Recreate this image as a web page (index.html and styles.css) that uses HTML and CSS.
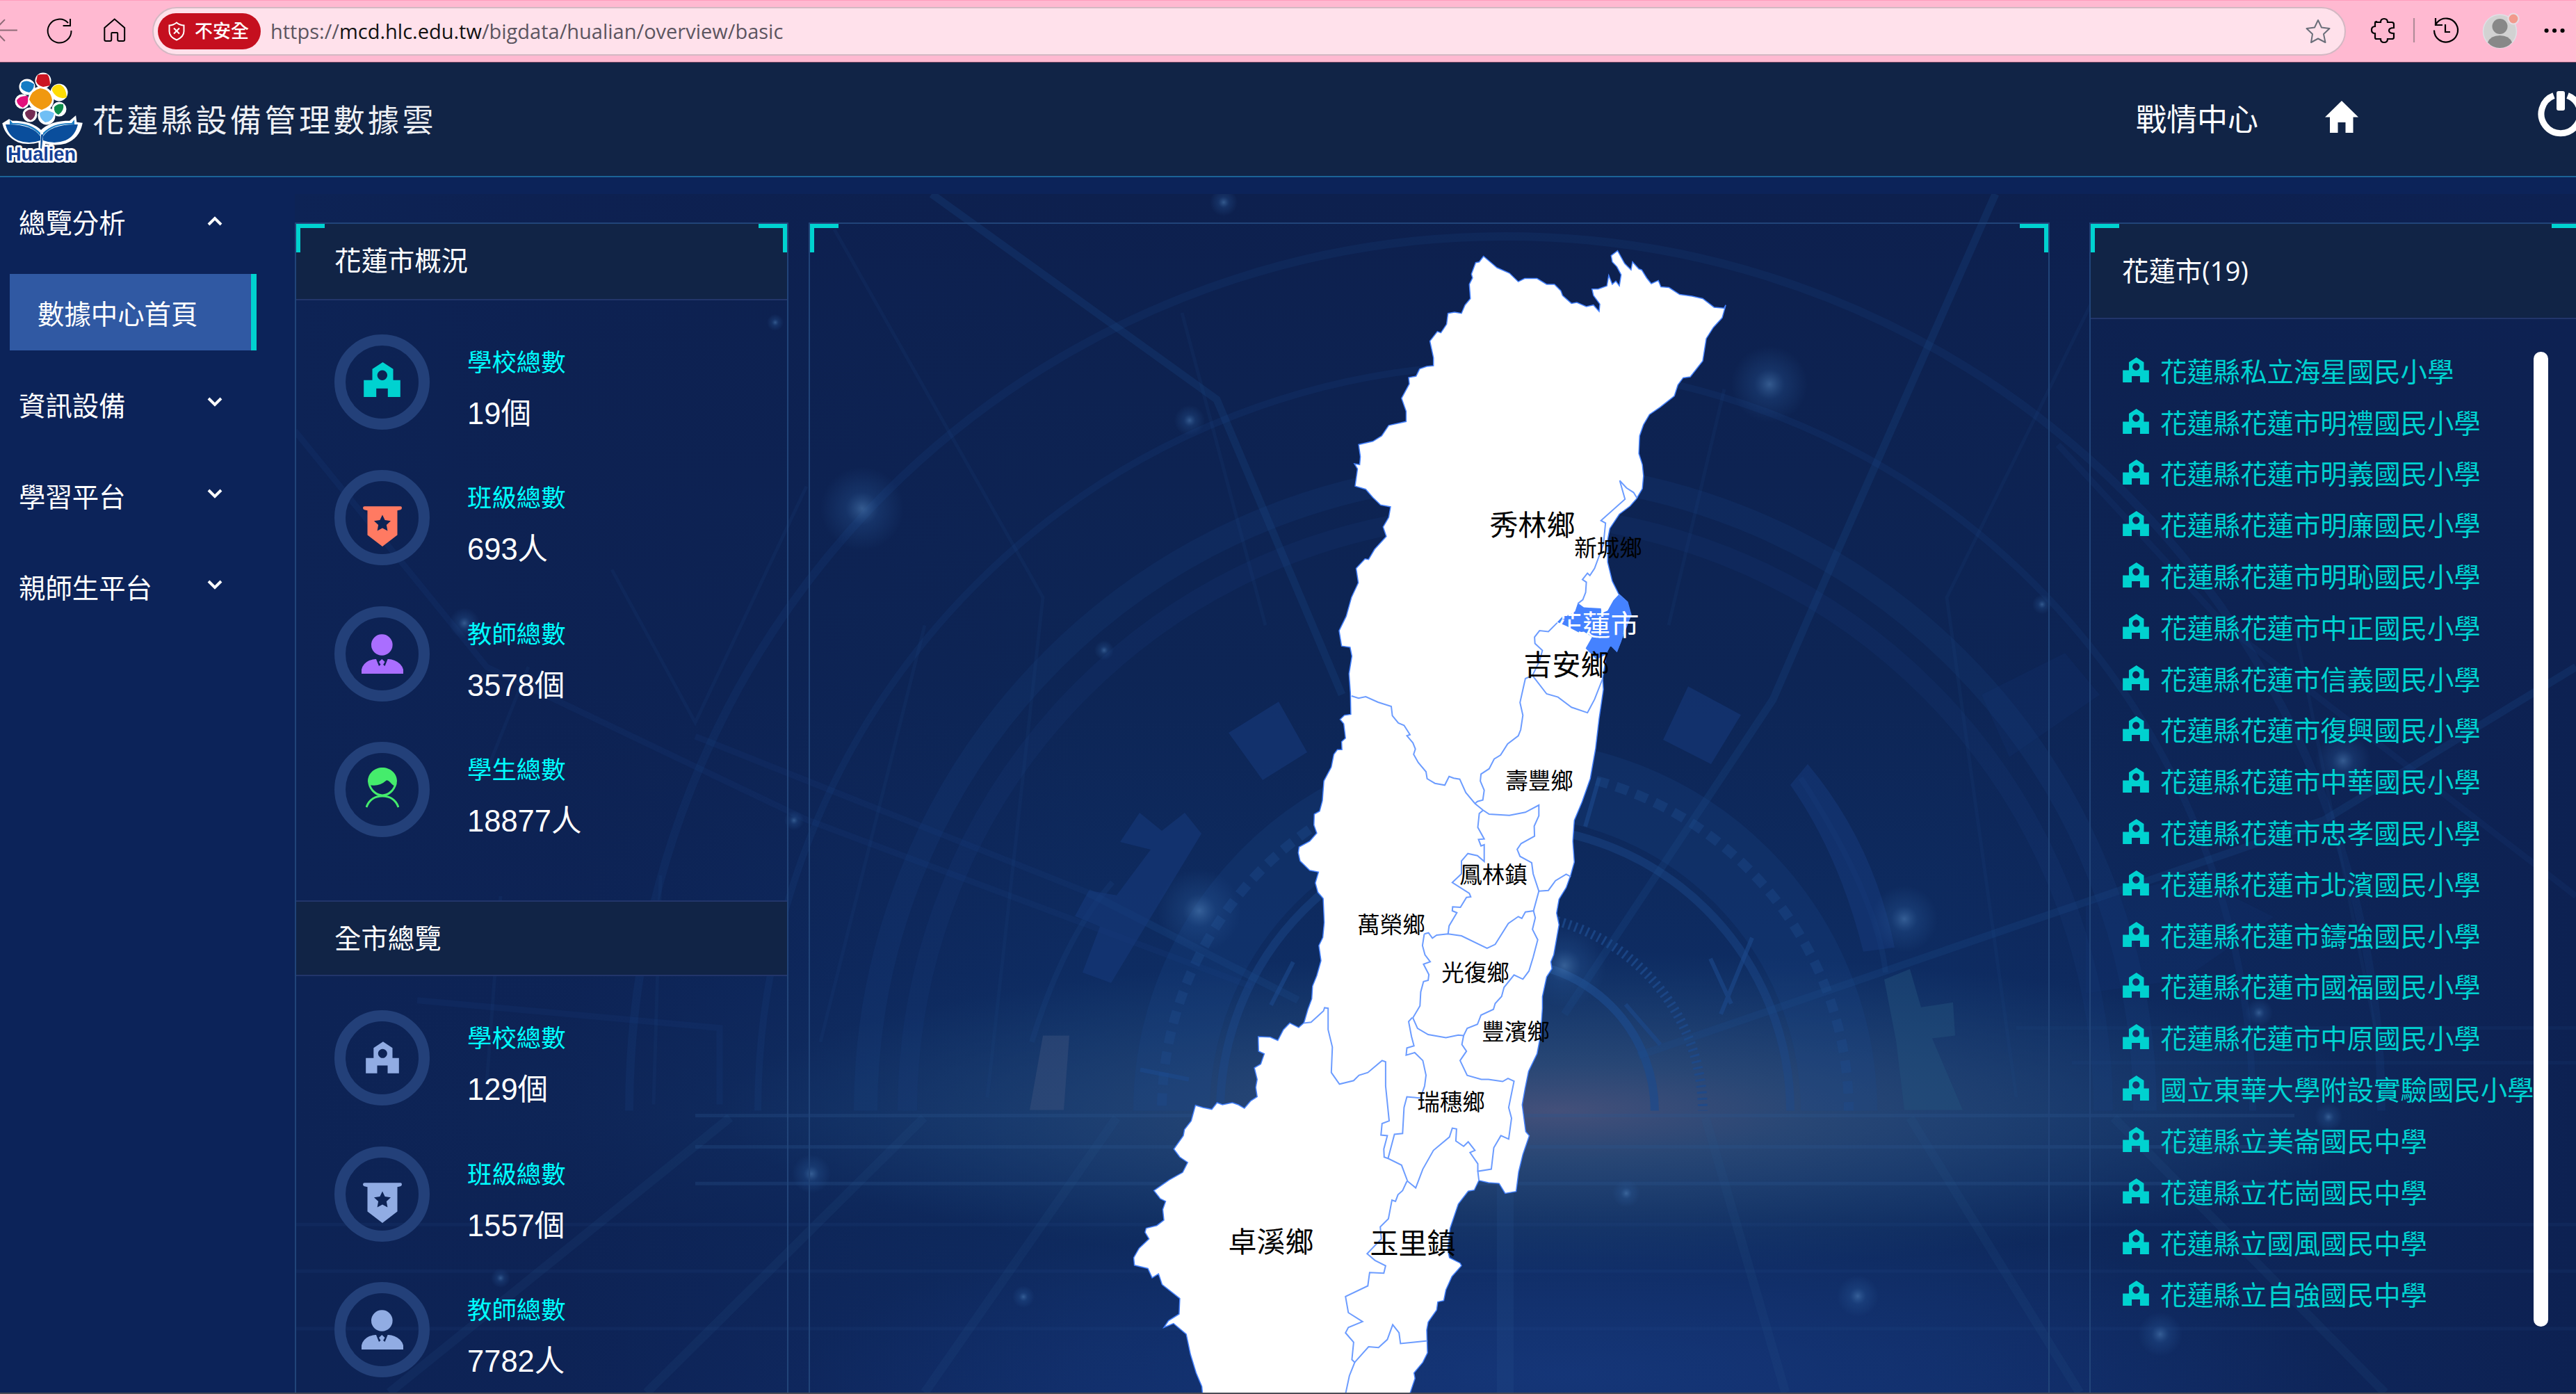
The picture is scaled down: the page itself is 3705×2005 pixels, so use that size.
FILE: index.html
```
<!DOCTYPE html>
<html lang="zh-Hant">
<head>
    <meta charset="UTF-8">
    <meta name="viewport" content="width=device-width, initial-scale=1.0">
    <title>花蓮縣設備管理數據雲</title>
    <link rel="stylesheet" href="styles.css">
</head>
<body>
    <!-- shared icons -->
    <svg class="sprite">
        <symbol id="school" viewBox="25.5 24 53 50">
            <path fill-rule="evenodd" d="M25.7 49.7H38V33.7L53 24l15 9.7v16h10.300V74H60.300V61.700H43.700V74H25.700ZM52.300 35.500a7.200 7.200 0 1 0 .1 0Z"/>
        </symbol>
        <symbol id="badge" viewBox="24 36 56 58">
            <path fill-rule="evenodd" d="M26.500 36.300h51.500q2 0 2 2.300t-2 2.600l-4.500 1v35.300L52 94 30.500 77.500V42.200l-4.500-1q-2-.3-2-2.600t2.500-2.300ZM52 48.500l-3.600 7.600-8.400 1.200 6.100 5.800-1.500 8.400 7.400-4 7.400 4-1.500-8.400 6.100-5.800-8.400-1.200Z"/>
        </symbol>
        <symbol id="teacher" viewBox="22 24 60 57">
            <circle cx="51.300" cy="39.500" r="15.300"/>
            <path d="M22 81V75Q24 66 33 62q7-2.500 10-2l4 10 2.500-2-2.500-4 4.300-4 4.300 4-2.500 4 2.500 2 4-10q4-.5 10 2 10 4 12.400 13V81Z"/>
        </symbol>
        <symbol id="student" viewBox="27 21 48 58">
            <path d="M30 41C30 29 40 21 51 21s21 8 21 19q0 5-2 8-4-1-8-6-4-4-6-2-10 9-24 6-2-2-2-5Z"/>
            <path d="M32 44c2 10 11 17 19 17s17-7 19-17M28 78c4-11 13-16 23-16s19 5 23 16" fill="none" stroke="currentColor" stroke-width="3"/>
        </symbol>
        <symbol id="chevron" viewBox="0 0 22 14">
            <path d="M2 2l9 9 9-9" fill="none" stroke="currentColor" stroke-width="4"/>
        </symbol>
    </svg>

    <div class="browser">
        <svg class="browser-nav" viewBox="0 0 220 89" fill="none" stroke="#000" stroke-width="2">
            <path d="M-4 42.500H25M7 27L-8 42.500 7 58" stroke="#8d6a76"/>
            <path d="M103 43a17 17 0 1 1-4.500-11M101.500 26v10H91"/>
            <path d="M151 39l14.500-12.500L180 39v17q0 2-2 2h-6q-2 0-2-2V47q0-1-1-1h-7q-1 0-1 1v9q0 2-2 2h-6q-2 0-2-2Z"/>
        </svg>
        <div class="address">
            <div class="unsafe">
                <svg viewBox="0 0 24 28" fill="none" stroke="#fff" stroke-width="2">
                    <path d="M12 1.500q5 4 10.500 4V14q0 8-10.500 12.500Q1.500 22 1.500 14V5.500q5.500 0 10.500-4ZM8 9.500l8 8M16 9.500l-8 8"/>
                </svg>
                <span>不安全</span>
            </div>
            <div class="url">https://<b>mcd.hlc.edu.tw</b>/bigdata/hualian/overview/basic</div>
            <svg class="star" viewBox="0 0 36 36" fill="none" stroke="#6b6f7a" stroke-width="2" stroke-linejoin="round">
                <path d="M18 2l5 10.500 11.500 1.500-8.500 8 2.500 12L18 28.500 8 34l2-12-8.500-8L13 12.500Z"/>
            </svg>
        </div>
        <svg class="browser-tools" viewBox="0 0 331 89" fill="none" stroke="#000" stroke-width="2.200">
            <path d="M44 31h6q0-5 5-5t5 5h6q3 0 3 3v5q-7 0-7 4t7 4v6q0 2-3 2h-6q0 5-5 5t-5-5h-6q-2 0-2-2v-6q-5 0-5-5t5-5v-5q0-2 2-2Z"/>
            <path d="M98 25v35" stroke="#b08c98"/>
            <path d="M127 42.500a17 17 0 1 0 4.500-11.500l-3 4M129 25v10h10M143 34v11h7"/>
            <circle cx="221.500" cy="44" r="24" fill="#d2d2d2" stroke="#dfe0e6" stroke-width="1.500"/>
            <circle cx="221.500" cy="37" r="11" fill="#888" stroke="none"/>
            <path d="M204 60q4-10 17.500-10T239 60q-7 8-17.500 8T204 60Z" fill="#888" stroke="none"/>
            <circle cx="241" cy="26" r="7.500" fill="#f29a8c" stroke="#e8dce4"/>
            <path d="M288.500 43h.1M300 43h.1M311.500 43h.1" stroke-width="6" stroke-linecap="round"/>
        </svg>
    </div>

    <header class="header">
        <svg class="logo" viewBox="0 0 120 140">
            <g stroke="#fff" stroke-width="7">
                <circle cx="62" cy="26" r="8"/><circle cx="39" cy="35" r="8"/><circle cx="85" cy="43" r="9"/>
                <circle cx="32" cy="56" r="7"/><circle cx="85" cy="67" r="7"/><circle cx="43" cy="75" r="7"/><circle cx="67" cy="77" r="9"/>
                <circle cx="59" cy="53" r="15"/>
            </g>
            <path d="M5 88l8-5 4 2q28 0 42 14 14-14 42-14l7-6 1 8 8 1q-4 20-23 27-14 4-30 0l-2 10h-5V113q-18 5-31 0-17-8-21-25Z" fill="#fff" stroke="#fff" stroke-width="3"/>
            <path d="M54 18q5-2 14-1 4 4 4 16l-10 2q-8-2-10-8Z" fill="#cb1422"/>
            <path d="M31 29q7-6 18 2 0 8-7 12-10-2-12-8Z" fill="#147cc4"/>
            <path d="M75 37q4-6 12-5 8 4 9 18-8 3-15-2-7-6-6-11Z" fill="#ffdc05"/>
            <path d="M24 54q5-7 16-6 1 8-1 12l-6 5q-9-4-9-11Z" fill="#e2107c"/>
            <path d="M78 64q5-6 13-4 2 9-7 15-7-3-6-11Z" fill="#0d8c4b"/>
            <path d="M36 72q6-8 15-2 0 10-7 13-8-4-8-11Z" fill="#742c54"/>
            <path d="M57 73q8-8 21 0-2 12-13 13-8-5-8-13Z" fill="#70bff5"/>
            <path d="M42 53q3-13 16-16 15 2 17 17-1 9-15 14-14-5-18-15Z" fill="#f0980f"/>
            <path d="M8 89q38-1 50 17v6Q42 118 26 112 12 106 8 89Z" fill="#0a4e9c"/>
            <path d="M112 89q-38-1-50 17v6q16 6 32 0 14-6 18-23Z" fill="#0a4e9c"/>
            <path d="M14 82l4 5q26-1 40 14v4Q43 87 14 89Zm93 0l-4 5q-26-1-41 14v4q14-18 45-16Z" fill="#1a7cc4"/>
            <path d="M59 104q2-2 3 0l-2 20h-2Z" fill="#0a4e9c"/>
            <text x="60" y="141" textLength="98" lengthAdjust="spacingAndGlyphs">Hualien</text>
        </svg>
        <h1>花蓮縣設備管理數據雲</h1>
        <nav>
            <span>戰情中心</span>
            <svg class="home" viewBox="0 0 48 46" fill="#fff"><path d="M24 0l24 23.500H40.500V46H29.500V31H18.500V46H7V23.500H0Z"/></svg>
            <svg class="power" viewBox="0 0 66 66">
                <path d="M23 6.500a28 28 0 1 0 20 0" fill="none" stroke="#fff" stroke-width="9"/>
                <rect x="27" y="0" width="12" height="28" rx="3" fill="#fff"/>
            </svg>
        </nav>
    </header>

    <div class="main">
        <aside class="sidebar">
            <div class="menu-item"><span>總覽分析</span><svg class="open"><use href="#chevron"/></svg></div>
            <div class="menu-item active"><span>數據中心首頁</span></div>
            <div class="menu-item"><span>資訊設備</span><svg><use href="#chevron"/></svg></div>
            <div class="menu-item"><span>學習平台</span><svg><use href="#chevron"/></svg></div>
            <div class="menu-item"><span>親師生平台</span><svg><use href="#chevron"/></svg></div>
        </aside>

        <div class="content">
            <!-- tech background -->
            <svg class="backdrop" viewBox="424 279 3281 1726" preserveAspectRatio="none">
                <defs>
                    <linearGradient id="base" x1="0" y1="0" x2="0" y2="1">
                        <stop offset="0" stop-color="#0d204e"/>
                        <stop offset=".4" stop-color="#0d2555"/>
                        <stop offset=".65" stop-color="#0e2c62"/>
                        <stop offset=".77" stop-color="#12346a"/>
                        <stop offset=".86" stop-color="#0e2a5e"/>
                        <stop offset="1" stop-color="#102c66"/>
                    </linearGradient>
                    <linearGradient id="edges" x1="0" y1="0" x2="1" y2="0">
                        <stop offset="0" stop-color="#0d2355"/>
                        <stop offset=".12" stop-color="#0d2152" stop-opacity=".8"/>
                        <stop offset=".35" stop-color="#0d2152" stop-opacity="0"/>
                        <stop offset=".72" stop-color="#0d2152" stop-opacity="0"/>
                        <stop offset="1" stop-color="#0d2152"/>
                    </linearGradient>
                    <radialGradient id="haze">
                        <stop offset="0" stop-color="#44507a"/>
                        <stop offset=".3" stop-color="#2c4a77" stop-opacity=".85"/>
                        <stop offset="1" stop-color="#1b4477" stop-opacity="0"/>
                    </radialGradient>
                    <radialGradient id="glow">
                        <stop offset="0" stop-color="#4f80b8" stop-opacity=".6"/>
                        <stop offset=".4" stop-color="#2b5c9c" stop-opacity=".28"/>
                        <stop offset="1" stop-color="#2b5c9c" stop-opacity="0"/>
                    </radialGradient>
                    <radialGradient id="floor">
                        <stop offset="0" stop-color="#16387c" stop-opacity=".8"/>
                        <stop offset="1" stop-color="#16387c" stop-opacity="0"/>
                    </radialGradient>
                    <clipPath id="sky"><rect x="424" y="279" width="3281" height="1320"/></clipPath>
                </defs>
                <rect x="424" y="279" width="3281" height="1726" fill="url(#base)"/>
                <rect x="424" y="279" width="3281" height="1726" fill="url(#edges)"/>
                <ellipse cx="2250" cy="1980" rx="1100" ry="240" fill="url(#floor)"/>
                <ellipse cx="2240" cy="1600" rx="1200" ry="230" fill="url(#haze)"/>
                <g clip-path="url(#sky)" fill="none" stroke="#1d4a8c">
                    <circle cx="2165" cy="1600" r="1260" stroke-width="12" opacity=".18"/>
                    <circle cx="2165" cy="1600" r="1075" stroke-width="10" opacity=".18"/>
                    <circle cx="2165" cy="1600" r="920" stroke-width="34" opacity=".18"/>
                    <circle cx="2165" cy="1600" r="860" stroke-width="28" opacity=".14"/>
                    <circle cx="2165" cy="1600" r="480" stroke-width="110" opacity=".22"/>
                    <circle cx="2165" cy="1600" r="494" stroke-width="14" stroke-dasharray="18 12" opacity=".4"/>
                    <circle cx="2165" cy="1600" r="410" stroke-width="12" opacity=".45"/>
                    <circle cx="2165" cy="1600" r="284" stroke-width="14" stroke-dasharray="3 6" opacity=".8"/>
                    <circle cx="2165" cy="1600" r="215" stroke-width="12" opacity=".7"/>
                    <path d="M2590 1120Q2700 1290 2712 1400M1484 1500Q1530 1350 1600 1270" stroke-width="8" opacity=".2"/>
                    <path d="M2250 1460L2550 1007 2640 800 2870 279M1340 279L1750 575 1930 1000M2356 1520L3342 1181 3705 960M1867 1440L1565 1285" stroke-width="11" opacity=".25"/>
                    <path d="M1565 1285L1000 1060M424 620L700 960 1160 1180 1800 1420M2960 640L3200 900 3705 1290M600 1440L1035 1480V1590" stroke-width="9" opacity=".14"/>
                    <path d="M1200 330L1500 860 1420 1580M1330 900L1180 1500M3060 330L2800 860 2900 1580M3300 900L3420 1500M1700 450L1820 900M2480 560L2400 900M880 820L1000 1040 1160 700M700 1110L760 960M720 1290L700 1560M950 1260L940 1590M2900 1480H3705M2980 1530H3705" stroke-width="5" opacity=".13"/>
                    <path d="M2338 1446l50 58M2520 1350l-45 110M2460 1380l30 65M1860 1385l-32 62M1640 1540l70 14M2300 1120l-20 70" stroke-width="6" opacity=".6"/>
                </g>
                <g fill="#16387a">
                    <path opacity=".6" d="M1839 1010L1880 1083 1816 1123 1767 1055ZM2428 988L2504 1029 2461 1100 2392 1065Z"/>
                    <path opacity=".55" d="M2600 1100l-25 30q70 100 105 240l45-6q-30-150-125-264Z"/>
                    <path opacity=".6" d="M1639 1170l32 26 33-26 24 30-130 215-41-15 25-66-36-15 20-37 40 7 49-66-44-11Z"/>
                    <path fill="#22507c" opacity=".5" d="M2710 1410l37-15 16 55 46-7 3 48-33 4 44 103h-84l-12-100Z"/>
                    <path fill="#3a4f7c" opacity=".5" d="M1500 1491h38l-8 107h-49Z"/>
                    <path opacity=".2" d="M3000 1300l150-40 120 60-130 90-140 20ZM2850 1000l120-60 50 60-130 90Z"/>
                </g>
                <!-- floor grid -->
                <g stroke="#2a5690" fill="none">
                    <path d="M1000 1606H3300M1000 1651H3300M1000 1704H3300" stroke-width="5" opacity=".28"/>
                    <path d="M424 1763H3705M424 1830H3705M424 1913H3705" stroke-width="5" opacity=".12"/>
                    <path d="M2165 1700V2005" stroke-width="24" opacity=".2"/>
                    <path d="M2453 1609L2568 2005M2747 1609L2991 2005M1606 1609L1330 2005M1329 1609L930 2005M3040 1609L3430 2005M1050 1609L560 2005" stroke-width="13" opacity=".15"/>
                </g>
                <g fill="url(#glow)">
                    <circle cx="2545" cy="553" r="55"/><circle cx="1240" cy="732" r="60"/><circle cx="1711" cy="605" r="22"/>
                    <circle cx="1760" cy="291" r="20"/><circle cx="1115" cy="464" r="12"/><circle cx="1588" cy="936" r="14"/>
                    <circle cx="1725" cy="1311" r="60"/><circle cx="2739" cy="1323" r="48"/><circle cx="2937" cy="870" r="14"/>
                    <circle cx="1142" cy="1181" r="14"/><circle cx="1167" cy="1690" r="28"/><circle cx="1472" cy="1867" r="16"/>
                    <circle cx="2672" cy="1866" r="30"/><circle cx="3107" cy="1921" r="32"/><circle cx="2339" cy="1718" r="20"/>
                    <circle cx="3249" cy="1458" r="20"/><circle cx="3349" cy="1608" r="20"/><circle cx="3370" cy="1095" r="40"/>
                    <circle cx="720" cy="1840" r="14"/><circle cx="668" cy="897" r="22"/><circle cx="2250" cy="1390" r="60"/>
                </g>
            </svg>

            <section class="panel stats">
                <h2>花蓮市概況</h2>
                <ul>
                    <li><i><svg class="i-school teal"><use href="#school"/></svg></i><div><b>學校總數</b><span>19個</span></div></li>
                    <li><i><svg class="i-badge coral"><use href="#badge"/></svg></i><div><b>班級總數</b><span>693人</span></div></li>
                    <li><i><svg class="i-teacher purple"><use href="#teacher"/></svg></i><div><b>教師總數</b><span>3578個</span></div></li>
                    <li><i><svg class="i-student green"><use href="#student"/></svg></i><div><b>學生總數</b><span>18877人</span></div></li>
                </ul>
                <h2 class="second">全市總覽</h2>
                <ul>
                    <li><i><svg class="i-school small"><use href="#school"/></svg></i><div><b>學校總數</b><span>129個</span></div></li>
                    <li><i><svg class="i-badge"><use href="#badge"/></svg></i><div><b>班級總數</b><span>1557個</span></div></li>
                    <li><i><svg class="i-teacher"><use href="#teacher"/></svg></i><div><b>教師總數</b><span>7782人</span></div></li>
                </ul>
            </section>

            <section class="panel map">
                <svg viewBox="1165 322 1781 1681">
                    <path class="land" d="M2133.700 368.500L2127.500 376.700 2122.400 377.700 2116.300 394.200 2117.900 399.700 2113.300 408.900 2114.800 429.500 2107.100 438.700 2102 450.700 2092 449 2082.600 450.700 2080.600 466.300 2072.400 478.700 2067.300 476.800 2056.600 490.600 2061.700 514.500 2061.700 526 2052 527 2041.800 530.600 2036.700 541.100 2026 543 2027 552.100 2015.800 572.800 2022.400 591.600 2022.400 606.300 1997.400 611.800 1987.200 627 1974.500 634.800 1954.100 639.400 1956.600 656.800 1955.600 668.300 1948 667 1952.500 674.300 1949 699.100 1964.300 703.700 1974.500 715.600 1985.700 726.200 2000 728.900 1997.400 744.100 1989.300 757.900 1993.900 771.600 1977 790 1968.400 804.700 1963.300 803.800 1950.500 817.600 1953.600 838.200 1943.900 858.900 1936.200 886.400 1926 907.100 1929.600 929.200 1941.800 931 1944.400 943.800 1940.300 969.100 1942.300 996.700 1942.900 1027.400 1933.700 1028.800 1927.500 1034.800 1932.700 1041 1935.200 1061.700 1929.600 1066.700 1930.100 1078.300 1923.500 1078.300 1918.400 1085 1914.800 1103.300 1904.100 1123.300 1902 1151.700 1898 1166.700 1890.300 1171 1889.800 1186.700 1893.900 1198.300 1883.700 1210 1868.400 1218.300 1867.300 1226.700 1869.900 1238.300 1883.700 1251.700 1896.400 1254.300 1891.800 1270 1895.400 1283.300 1903.100 1292.300 1904.600 1326.700 1902.600 1348.300 1896.900 1360 1900 1381.700 1893.900 1403.300 1887.800 1418.300 1886.700 1436.700 1881.100 1451.700 1875.500 1471 1867.900 1477.900 1855.100 1471.400 1845.900 1481 1837.800 1496.500 1827 1491.800 1809.700 1491 1810.200 1511.900 1818.400 1515.700 1813.300 1530.400 1804.100 1535.800 1808.200 1552.400 1806.100 1564 1808.200 1577.500 1799 1583.300 1789.800 1594.100 1781.100 1589 1772.400 1586 1758.200 1589 1750.500 1586 1742.900 1595.600 1730.100 1592.900 1719.400 1589.800 1713.300 1612.200 1703.600 1624.500 1702 1633.400 1688.300 1652.700 1696.900 1664.300 1708.200 1672 1701 1686.300 1681.600 1697.100 1659.700 1712.500 1668.900 1724.100 1676.500 1727.900 1672.400 1739.500 1674 1754.900 1663.800 1762.700 1648.500 1766.500 1646.900 1772.300 1652.600 1781.900 1638.300 1795.400 1630.600 1808.900 1631.600 1819.800 1651 1824.400 1657.100 1837.900 1666.300 1832.100 1671.400 1847.500 1696.900 1867.600 1695.900 1890 1680.600 1899.600 1674 1909.300 1687.800 1903.500 1706.100 1918.900 1712.200 1947.800 1720.400 1974.800 1728.600 1994.100 1730 2010H2026L2035.200 1982.600 2033.700 1974.800 2046.400 1959.400 2053.100 1945.900 2052 1913.100 2054.100 1901.500 2066.300 1884.200 2067.900 1872.600 2076.500 1870.700 2079.600 1855.200 2088.300 1835.900 2102 1820.500 2100 1816.700 2084.700 1808.900 2082.100 1797.400 2085.700 1766.500 2097.400 1731.800 2111.700 1713.300 2120.400 1711.700 2127 1697.800 2140.800 1700.900 2156.100 1702.100 2164.800 1716.400 2180.600 1713.700 2184.200 1685.500 2190.300 1660.400 2199.500 1633.400 2194.400 1627.600 2189.300 1589 2193.400 1565.900 2198.500 1540.800 2210.700 1515.700 2215.800 1488.700 2218.400 1450.200 2218.400 1433.300 2224.500 1405 2232.100 1393.300 2230.600 1383.300 2234.700 1373.300 2242.300 1330 2238.800 1313.300 2242.300 1293.300 2252.600 1276.700 2259.200 1258.300 2264.300 1240 2262.200 1210 2264.300 1180 2275.500 1153.300 2287.200 1120 2294.900 1076.700 2300 1033.300 2306.100 991.700 2305.100 976 2311.200 937 2316.300 927.800 2325.500 937 2331.600 920.900 2345.900 884.100 2340.800 865.800 2328.100 854.300 2318.900 835.900 2312.200 808.400 2312.200 776.200 2315.300 760.200 2329.100 739.500 2344.400 728 2353.600 717.500 2362.200 702.800 2363.800 684.400 2362.200 668.300 2357.100 652.300 2358.200 627 2363.800 610.900 2372.400 596.200 2387.800 585.700 2408.200 569.600 2413.300 553.500 2420.900 543.400 2431.100 542 2449 519.100 2454.100 486.900 2464.300 470.900 2477 457.100 2482.100 438.700 2479.600 443.300 2465.300 441.900 2449 429.500 2433.700 425.900 2415.800 423.600 2400.500 413.500 2388.800 412.600 2385.200 403.400 2375 408 2368.400 399.700 2361.200 388.200 2357.100 386.800 2348 376.700 2345.900 388.200 2336.700 379 2326.500 360.700 2317.300 367.600 2318.900 376.700 2325.500 383.600 2331.600 395.100 2329.100 411.200 2324 404.300 2318.900 408.900 2313.800 396 2311.200 411.200 2298.500 415.800 2289.800 415.800 2291.800 425 2301 437.400 2300 447.900 2291.800 438.700 2281.600 441 2267.900 435.100 2260.200 436.400 2247.400 425 2244.900 418.100 2235.700 408.900 2224.500 408.900 2210.700 400.600 2192.900 400.600 2183.700 405.200 2170.900 392.800 2153.100 385Z"/>
                    <path class="city" d="M2269.400 867.200L2278 873.600 2302.600 875 2303.600 881.900 2312.200 878.200 2320.400 863.500 2328.100 855.200 2340.800 865.800 2345.900 884.100 2335.700 907.100 2331.600 923.200 2325.500 937.900 2316.300 927.800 2310.200 941.500 2295.900 948.400 2280.600 932.400 2289.800 916.300 2278 908.500 2270.400 909.400 2252.600 900.200 2239.800 894.700 2247.400 886.400 2257.700 884.100 2265.300 879.600Z"/>
                    <g class="borders">
                        <path d="M1943.900 1001L1954 1004.300 1964.300 1002 1982 1010 2001 1016 2002.600 1029.300 2011.200 1040 2019.400 1043.300 2028 1056.700 2023.500 1058.300 2032.100 1068.300 2035.700 1077.300 2033.200 1085 2039.800 1096.700 2051 1110 2052.600 1120 2063.800 1126.700 2078 1129.300 2084.200 1116.700 2090.800 1119.300 2099.500 1120.700 2108.200 1140 2121.400 1155.700 2132.700 1165 2141.800 1171 2170.900 1172.700 2193.900 1168.300 2213.300 1158 2213.300 1173.300 2206.600 1188.300 2207.100 1202.700 2187.800 1213.300 2182.100 1221.700 2186.200 1231.700 2203 1241 2205.100 1256.700 2213.300 1281.700 2227 1280.700 2237.200 1266.700 2252.600 1257.300 2259.200 1261"/>
                        <path d="M2239.800 895.600L2227 908.500 2214.300 907.100 2207.100 916.300 2207.700 925.500 2218.400 935.600 2214.300 950.700 2204.100 971.400 2193.900 976 2190.300 992 2186.200 1010.400 2190.300 1028.800 2187.200 1049.500 2183.700 1058.300 2168.400 1070 2158.200 1086 2149 1091.700 2141.800 1105.700 2130.100 1113.300 2129.100 1123.300 2134.700 1136.700 2132.700 1150.700 2125 1152.700 2121.400 1155.700"/>
                        <path d="M2205.100 972.800L2224.500 998 2240.800 1002.600 2260.200 1017.300 2283.200 1025.100 2293.400 1005.900 2305.100 976"/>
                        <path d="M2354.600 716.500L2349.500 708.300 2339.300 701.800 2329.600 691.300 2337.200 717.900 2302.600 748.700 2309.200 752.400 2306.100 783.100 2293.400 817.600 2286.700 827.700 2283.200 824.500 2276 833.600 2281.600 837.300 2280.600 852 2276.500 862.600 2269.400 868.100"/>
                        <path d="M2132.700 1165.700L2127.600 1170 2125.500 1190 2134.700 1206.700 2126.500 1207.300 2130.100 1216.700 2134.700 1215 2134.700 1239 2125 1230.700 2111.200 1227.700 2102 1238.300 2102 1256.700 2088.800 1269.300 2113.300 1285 2115.300 1290 2109.200 1290.700 2100.500 1305 2089.300 1304.300 2088.800 1310 2095.400 1312.700 2084.200 1331.700 2082.700 1343.300"/>
                        <path d="M2048.500 1343.300L2054.600 1341.700 2060.200 1349.300 2066.300 1345 2082.700 1343.300 2102 1346 2138.800 1364 2150.500 1358.300 2169.400 1328.300 2183.700 1318.300 2188.800 1321 2193.900 1311.700 2205.600 1310 2213.300 1281.700"/>
                        <path d="M2205.600 1310L2208.200 1320 2204.100 1336.700 2211.700 1351.700 2205.100 1376.700 2199 1396.700 2190.300 1408.300 2177.600 1402.300 2163.300 1420 2159.700 1433.300 2150.500 1443.300 2148 1451.700 2130.100 1460 2125 1473.300 2110.200 1479.100 2105.100 1489.500 2102.600 1502.200 2109.200 1511.900 2100 1525.400 2110.200 1546.600 2130.600 1552.400 2140.800 1552.400 2161.200 1555.500 2168.900 1551.200 2177.600 1555.100 2169.900 1592.900 2174 1608.300 2169.900 1638.400 2158.700 1633.400 2148.500 1650.800 2144.900 1681.600 2125.500 1684.700 2127 1697"/>
                        <path d="M2048.500 1343.300L2045.900 1360 2049.500 1373.300 2057.100 1383.300 2047.400 1386.700 2055.100 1401.700 2054.100 1410 2047.400 1411.700 2043.400 1426.700 2042.300 1446.700 2032.100 1464 2038.800 1479.100 2054.100 1488 2079.600 1492.600 2097.400 1488.700 2105.100 1489.500"/>
                        <path d="M2031.100 1463.700L2026 1469.400 2030.100 1490.700 2033.700 1504.200 2023.500 1507.300 2022.400 1517.700 2034.700 1514 2046.400 1525.400 2051 1546.600 2049 1562 2042.900 1579.400 2023.500 1577.500 2019.400 1592.900 2017.300 1630.300 2005.600 1631.500 1996.400 1666.200 2015.800 1675.800 2024.500 1699 2036.200 1708.600 2046.400 1681.600 2061.700 1654.600 2084.700 1635.300 2088.800 1622.600 2094.900 1623.800 2093.900 1641.100 2105.100 1648.800 2111.700 1642.300 2121.400 1654.600 2114.300 1657.700 2125.500 1673.900 2125.500 1684.700"/>
                        <path d="M1875.500 1471.400L1885.700 1470.200 1903.600 1454 1905.100 1449.400 1910.200 1450.200 1910.200 1481 1916.300 1506.100 1914.800 1542.700 1926.500 1559.300 1946.900 1554.300 1954.600 1546.600 1967.300 1542.700 1987.800 1525.400 1992.900 1527.300 1992.900 1562 1998 1612.200 1987.800 1616 1986.200 1632.600 1995.400 1633.400 1990.300 1652.700 1990.800 1664.300 1996.400 1666.200"/>
                        <path d="M2023.500 1699L2017.300 1712.500 2010.700 1718.300 2007.100 1727.900 2002 1726 1996.900 1753 1985.200 1764.600 1986.700 1781.900 1966.300 1803.200 1977.600 1812.800 1992.900 1820.500 1990.300 1831.300 1969.900 1830.200 1967.300 1849.500 1935.200 1864.900 1939.300 1888 1959.700 1900.800 1939.300 1909.300 1935.200 1917 1946.900 1930.500 1944.400 1955.600 1948.500 1959.400 1940.800 1978.700 1935.200 2005"/>
                        <path d="M1948.500 1959.400L1968.400 1937 1982.700 1938.200 1995.400 1926.600 2003.100 1905.400 2012.200 1917 2014.300 1932.400 2033.700 1930.500 2053 1928.500"/>
                    </g>
                    <g class="labels">
                        <text class="lg" x="2204" y="756">秀林鄉</text>
                        <text x="2313" y="789">新城鄉</text>
                        <text class="lg picked" x="2296" y="900">花蓮市</text>
                        <text class="lg" x="2253" y="957">吉安鄉</text>
                        <text x="2214" y="1124">壽豐鄉</text>
                        <text x="2148" y="1259">鳳林鎮</text>
                        <text x="2001" y="1331">萬榮鄉</text>
                        <text x="2122" y="1400">光復鄉</text>
                        <text x="2180" y="1485">豐濱鄉</text>
                        <text x="2087" y="1586">瑞穗鄉</text>
                        <text class="lg" x="1828" y="1787">卓溪鄉</text>
                        <text class="lg" x="2032" y="1789">玉里鎮</text>
                    </g>
                </svg>
            </section>

            <section class="panel schools">
                <h2>花蓮市(19)</h2>
                <div class="scroll">
                    <ul>
                        <li><svg><use href="#school"/></svg>花蓮縣私立海星國民小學</li>
                        <li><svg><use href="#school"/></svg>花蓮縣花蓮市明禮國民小學</li>
                        <li><svg><use href="#school"/></svg>花蓮縣花蓮市明義國民小學</li>
                        <li><svg><use href="#school"/></svg>花蓮縣花蓮市明廉國民小學</li>
                        <li><svg><use href="#school"/></svg>花蓮縣花蓮市明恥國民小學</li>
                        <li><svg><use href="#school"/></svg>花蓮縣花蓮市中正國民小學</li>
                        <li><svg><use href="#school"/></svg>花蓮縣花蓮市信義國民小學</li>
                        <li><svg><use href="#school"/></svg>花蓮縣花蓮市復興國民小學</li>
                        <li><svg><use href="#school"/></svg>花蓮縣花蓮市中華國民小學</li>
                        <li><svg><use href="#school"/></svg>花蓮縣花蓮市忠孝國民小學</li>
                        <li><svg><use href="#school"/></svg>花蓮縣花蓮市北濱國民小學</li>
                        <li><svg><use href="#school"/></svg>花蓮縣花蓮市鑄強國民小學</li>
                        <li><svg><use href="#school"/></svg>花蓮縣花蓮市國福國民小學</li>
                        <li><svg><use href="#school"/></svg>花蓮縣花蓮市中原國民小學</li>
                        <li><svg><use href="#school"/></svg>國立東華大學附設實驗國民小學</li>
                        <li><svg><use href="#school"/></svg>花蓮縣立美崙國民中學</li>
                        <li><svg><use href="#school"/></svg>花蓮縣立花崗國民中學</li>
                        <li><svg><use href="#school"/></svg>花蓮縣立國風國民中學</li>
                        <li><svg><use href="#school"/></svg>花蓮縣立自強國民中學</li>
                    </ul>
                    <div class="scrollbar"></div>
                </div>
            </section>
        </div>
    </div>
</body>
</html>
```

FILE: styles.css
```
*,
*::before,
*::after {
    box-sizing: border-box;
    margin: 0;
    padding: 0;
}
body {
    display: flex;
    flex-direction: column;
    width: 3705px;
    height: 2005px;
    overflow: hidden;
    background: #0c2359;
    border-bottom: 2px solid #4a4c55;
    color: #fff;
    font-family: 'Liberation Sans', 'Noto Sans CJK TC', sans-serif;
    font-size: 38.4px;
}
ul {
    list-style: none;
}
.sprite {
    position: absolute;
    width: 0;
    height: 0;
}

/* browser bar */
.browser {
    display: flex;
    align-items: center;
    flex: none;
    height: 90px;
    background: #ffb9d1;
    border-top: 1px solid #ff9dbd;
    border-bottom: 1px solid #7a4b66;
}
.browser-nav {
    flex: none;
    width: 219px;
    height: 89px;
}
.browser-tools {
    flex: none;
    width: 331px;
    height: 89px;
}
.address {
    display: flex;
    align-items: center;
    flex: 1;
    height: 70px;
    margin-top: -1px;
    padding: 0 20px 0 6px;
    background: #ffe1eb;
    border: 2px solid #d3b8c3;
    border-radius: 35px;
}
.unsafe {
    display: flex;
    align-items: center;
    gap: 14px;
    width: 148px;
    height: 52px;
    padding-left: 15px;
    background: #c50f1f;
    border-radius: 26px;
    font-size: 26px;
    font-weight: 500;
}
.unsafe svg {
    width: 24px;
    height: 28px;
}
.unsafe span {
    margin-top: -4px;
}
.url {
    margin-left: 14px;
    color: #5c5560;
    font-family: 'Open Sans', sans-serif;
    font-size: 29px;
    white-space: nowrap;
}
.url b {
    color: #111;
    font-weight: 400;
}
.star {
    width: 36px;
    height: 36px;
    margin-left: auto;
}

/* header */
.header {
    display: flex;
    align-items: center;
    flex: none;
    height: 165px;
    background: #112446;
    border-bottom: 2px solid #1b6396;
}
.logo {
    align-self: flex-start;
    width: 120px;
    height: 140px;
    overflow: visible;
}
.logo text {
    font-family: 'Liberation Sans', sans-serif;
    font-size: 27px;
    font-weight: 700;
    text-anchor: middle;
    fill: #153f96;
    stroke: #fff;
    stroke-width: 6px;
    stroke-linejoin: round;
    paint-order: stroke;
}
.header h1 {
    margin: -3px 0 0 13px;
    color: #eef0f4;
    font-size: 45px;
    font-weight: 400;
    letter-spacing: 4.5px;
}
.header nav {
    display: flex;
    align-items: center;
    margin-left: auto;
    margin-right: -11px;
    font-size: 44px;
}
.header nav span {
    margin-top: -5px;
}
.home {
    width: 48px;
    height: 46px;
    margin: -8px 258px 0 96px;
}
.power {
    width: 66px;
    height: 66px;
    margin-top: -15px;
}

/* sidebar */
.main {
    display: flex;
    flex: 1;
    min-height: 0;
}
.sidebar {
    flex: none;
    width: 424px;
}
.menu-item {
    display: flex;
    align-items: center;
    justify-content: space-between;
    width: 320px;
    height: 131.3px;
    padding-left: 27px;
}
.menu-item span {
    margin-top: -5px;
}
.menu-item svg {
    width: 22px;
    height: 14px;
    margin-top: -10px;
}
.menu-item svg.open {
    margin-top: -6px;
    transform: rotate(180deg);
}
.menu-item.active {
    width: 355px;
    height: 110px;
    margin: 8px 0 13.3px 14px;
    padding-left: 40px;
    background: #3059a3;
    border-right: 8px solid #00d2d0;
}
.menu-item.active span {
    margin-top: -1px;
}

/* content */
.content {
    position: relative;
    display: grid;
    grid-template-columns: 710px 1785px 708px;
    column-gap: 29px;
    flex: 1;
    margin-top: 24px;
    padding-top: 41px;
}
.backdrop {
    position: absolute;
    top: 0;
    left: 0;
    width: 100%;
    height: 100%;
}
.panel {
    position: relative;
    min-height: 0;
    height: 1700px;
    overflow: hidden;
    border: 2px solid #214479;
}
.panel::before,
.panel::after {
    content: '';
    position: absolute;
    top: 0;
    width: 41px;
    height: 41px;
    border-top: 6px solid #00d2d0;
}
.panel::before {
    left: 0;
    border-left: 6px solid #00d2d0;
}
.panel::after {
    right: 0;
    border-right: 6px solid #00d2d0;
}
.panel h2 {
    height: 110px;
    padding-left: 55px;
    background: #112446;
    border-bottom: 2px solid #22356a;
    font-size: 38.4px;
    font-weight: 400;
    line-height: 108px;
}
.panel h2.second {
    height: 109px;
    margin-top: 91px;
    border-top: 2px solid #22356a;
    line-height: 108px;
}

/* statistics */
.stats ul {
    display: grid;
    row-gap: 58.4px;
    padding: 49px 0 0 55px;
}
.stats li {
    display: flex;
    height: 137px;
}
.stats i {
    display: flex;
    align-items: center;
    justify-content: center;
    width: 137px;
    height: 137px;
    margin-right: 54px;
    border: 16px solid #234079;
    border-radius: 50%;
    color: #91ace3;
}
.stats i svg {
    fill: currentColor;
}
.stats li div {
    margin-top: 16px;
}
.stats b {
    display: block;
    margin-bottom: 18px;
    color: #00ffff;
    font-size: 35.4px;
    font-weight: 400;
    line-height: 50px;
}
.stats span {
    display: block;
    font-size: 43.5px;
    line-height: 60px;
}
.i-school {
    width: 53px;
    height: 50px;
    margin-top: -7px;
}
.i-school.small {
    width: 48px;
    height: 46px;
    margin-top: -2px;
}
.i-badge {
    width: 56px;
    height: 58px;
    margin-top: 25px;
}
.i-teacher {
    width: 60px;
    height: 57px;
}
.i-student {
    width: 48px;
    height: 58px;
    margin-top: -6px;
}
.teal {
    color: #00d2d0;
}
.coral {
    color: #ff7a62;
}
.purple {
    color: #aa6eff;
}
.green {
    color: #45ec6c;
}

/* map */
.map svg {
    display: block;
    width: 1781px;
    height: 1681px;
}
.land {
    fill: #fff;
    stroke: #4582ff;
    stroke-width: 1.5;
}
.city {
    fill: #4582ff;
}
.borders {
    fill: none;
    stroke: #6c9cff;
    stroke-width: 2;
}
.labels {
    fill: #000;
    font-size: 32.5px;
    text-anchor: middle;
    dominant-baseline: central;
}
.labels .lg {
    font-size: 41px;
}
.labels .picked {
    fill: #fff;
}

/* school list */
.schools {
    margin-left: 28px;
    width: 708px;
}
.schools h2 {
    height: 137px;
    padding-left: 45px;
    font-family: 'Open Sans', 'Noto Sans CJK TC', sans-serif;
    line-height: 135px;
}
.scroll {
    display: flex;
    justify-content: space-between;
    padding: 36px 46px 0 46px;
}
.schools li {
    display: flex;
    align-items: center;
    gap: 16px;
    height: 73.8px;
    color: #00d2d0;
    white-space: nowrap;
}
.schools li svg {
    width: 38px;
    height: 36px;
    fill: #00d2d0;
}
.scrollbar {
    width: 21px;
    height: 1402px;
    margin-top: 11px;
    background: #fff;
    border-radius: 10px;
}
```
